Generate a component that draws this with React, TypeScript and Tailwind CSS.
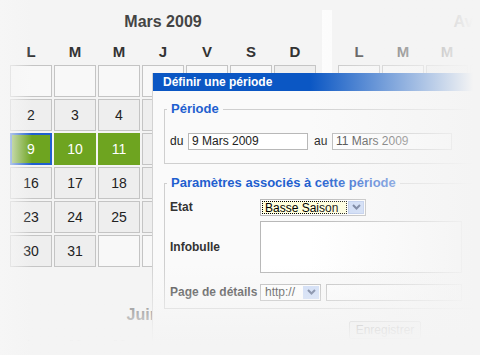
import React from "react";

type CalendarProps = {
  title: string;
  offset: number;
  days: number;
  selected?: number[];
  focus?: number;
};

const letters = ["L", "M", "M", "J", "V", "S", "D"];

function Calendar({ title, offset, days, selected = [], focus }: CalendarProps) {
  const cells = Array.from({ length: 42 }, (_, i) => {
    const day = i - offset + 1;
    return day >= 1 && day <= days ? day : null;
  });

  return (
    <div className="w-[306px] shrink-0">
      <h2 className="h-[20px] text-center text-[16px] font-bold leading-[20px] text-[#444]">{title}</h2>
      <div className="mt-[10px] grid grid-cols-[repeat(7,42px)] gap-x-[2px]">
        {letters.map((letter, i) => (
          <div key={i} className="h-[20px] text-center text-[15px] font-bold leading-[20px] text-[#333]">
            {letter}
          </div>
        ))}
      </div>
      <div className="mt-[3px] grid grid-cols-[repeat(7,42px)] gap-[2px]">
        {cells.map((day, i) => {
          const isSelected = day !== null && selected.includes(day);
          const isFocus = day === focus;
          return (
            <div
              key={i}
              className={
                "flex h-[32px] items-center justify-center text-[14px] leading-none " +
                (isFocus
                  ? "border-2 border-[#1f5fcf] bg-[#6ea420] text-white"
                  : isSelected
                  ? "border border-[#6ea420] bg-[#6ea420] text-white"
                  : day === null
                  ? "border border-[#c4c4c4] bg-[#f8f8f8]"
                  : "border border-[#c4c4c4] bg-[#eeeeee] text-[#222]")
              }
            >
              {day}
            </div>
          );
        })}
      </div>
    </div>
  );
}

function Chevron() {
  return (
    <svg width="9" height="6" viewBox="0 0 9 6" aria-hidden="true">
      <path d="M1 1 L4.5 4.5 L8 1" fill="none" stroke="#56668a" strokeWidth="2" />
    </svg>
  );
}

function PeriodDialog() {
  return (
    <div className="absolute bottom-0 left-[152px] top-[73px] w-[335px] border-l border-[#d2d2d2] bg-[#fafafa]">
      <div className="h-[18px] bg-[#0b57c4] pl-[10px] text-[12px] font-bold leading-[18px] text-white">
        Définir une période
      </div>

      <fieldset className="mx-[11px] mt-[10px] border border-[#cfcfcf] pb-[13px] pl-[5px]">
        <legend className="-ml-[3px] px-[4px] text-[13px] font-bold leading-[16px] text-[#1f5fcf]">Période</legend>
        <div className="mt-[15px] flex items-center text-[12px] text-[#222]">
          <span className="w-[18px]">du</span>
          <div className="h-[17px] w-[120px] border border-[#b8b8b8] bg-white pl-[3px] leading-[15px]">9 Mars 2009</div>
          <span className="ml-[6px] w-[18px]">au</span>
          <div className="h-[17px] w-[120px] border border-[#b8b8b8] bg-white pl-[3px] leading-[15px] text-[#333]">
            11 Mars 2009
          </div>
        </div>
      </fieldset>

      <fieldset className="mx-[11px] mt-[11px] border border-[#cfcfcf] pb-[7px] pl-[5px]">
        <legend className="-ml-[3px] px-[4px] text-[13px] font-bold leading-[16px] text-[#1f5fcf]">
          Paramètres associés à cette période
        </legend>
        <div className="mt-[7px] grid grid-cols-[90px_1fr] items-center gap-y-[5px] text-[12px]">
          <span className="font-bold text-[#333]">Etat</span>
          <div className="flex h-[17px] w-[106px] items-center border border-[#b8b8b8] bg-white p-px">
            <div className="h-full flex-1 border border-dotted border-black bg-[#ffffdc] pl-[2px] leading-[12px] text-black">
              Basse Saison
            </div>
            <div className="ml-px flex h-full w-[16px] items-center justify-center border border-[#b4c6ec] bg-[#c9d9f7]">
              <Chevron />
            </div>
          </div>

          <span className="font-bold text-[#333]">Infobulle</span>
          <div className="h-[52px] w-[202px] border border-[#b8b8b8] bg-white" />

          <span className="mt-[5px] font-bold text-[#333]">Page de détails</span>
          <div className="mt-[5px] flex items-center gap-[5px]">
            <div className="flex h-[17px] w-[61px] items-center border border-[#b8b8b8] bg-white p-px">
              <span className="flex-1 pl-[3px] leading-[13px] text-[#333]">http://</span>
              <div className="flex h-full w-[16px] items-center justify-center bg-[#c9d9f7]">
                <Chevron />
              </div>
            </div>
            <div className="h-[17px] w-[136px] border border-[#b8b8b8] bg-white" />
          </div>
        </div>
      </fieldset>

      <button
        type="button"
        className="ml-[196px] mt-[12px] h-[18px] w-[72px] rounded-[2px] border border-[#a8a8a8] bg-[#eeeeee] text-[12px] leading-[16px] text-[#444]"
      >
        Enregistrer
      </button>
    </div>
  );
}

export default function App() {
  return (
    <div className="relative h-[355px] w-[480px] overflow-hidden bg-[#f4f4f4] font-['Liberation_Sans',Arial,sans-serif]">
      <div className="flex flex-col gap-[38px] pl-[10px] pt-[12px]">
        <div className="flex">
          <Calendar title="Mars 2009" offset={6} days={31} selected={[10, 11]} focus={9} />
          <div className="ml-[6px] mt-[-2px] w-[10px] shrink-0 bg-white/80" />
          <div className="ml-[6px]">
            <Calendar title="Avril 2009" offset={2} days={30} />
          </div>
        </div>
        <div className="flex gap-[22px]">
          <Calendar title="Juin 2009" offset={0} days={30} />
          <Calendar title="Juillet 2009" offset={2} days={31} />
        </div>
      </div>

      <PeriodDialog />

      <div className="pointer-events-none absolute inset-y-0 left-[310px] right-0 bg-linear-to-r from-[rgba(244,244,244,0)] to-[rgba(244,244,244,1)] to-[96%]" />
      <div className="pointer-events-none absolute inset-x-0 bottom-0 top-[265px] bg-linear-to-b from-[rgba(244,244,244,0)] to-[rgba(244,244,244,1)] to-[85%]" />
      <div className="pointer-events-none absolute inset-y-0 left-0 w-[32px] bg-linear-to-r from-[rgba(246,246,246,1)] to-[rgba(246,246,246,0)]" />
    </div>
  );
}
